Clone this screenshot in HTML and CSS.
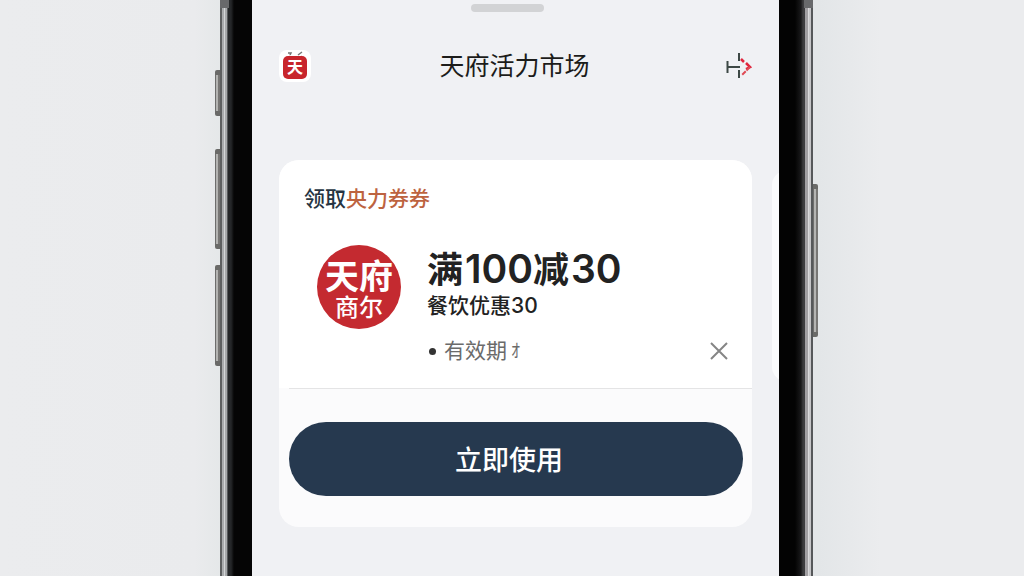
FILE: index.html
```html
<!DOCTYPE html>
<html lang="zh-CN">
<head>
<meta charset="utf-8">
<meta name="viewport" content="width=device-width, initial-scale=1">
<title>天府活力市场</title>
<link rel="stylesheet" href="styles.css">
</head>
<body>
<div class="stage">
  <div class="phone">
    <span class="key key-mute"></span>
    <span class="key key-up"></span>
    <span class="key key-down"></span>
    <span class="key key-power"></span>
    <main class="screen">
      <div class="grabber"></div>
      <header class="topbar">
        <span class="app-icon">
          <svg viewBox="0 0 32 32" aria-hidden="true">
            <path d="M9 3l3 0-1 2M19 5l4-3" stroke="#777" stroke-width="1.5" fill="none"/>
            <path d="M10 6l3 2M20 8l3-2" stroke="#c9343a" stroke-width="1" fill="none"/>
            <rect x="4" y="6" width="24" height="23" rx="5" fill="#c8252c"/>
          </svg>
          <span class="app-glyph">天</span>
        </span>
        <h1 class="title">天府活力市场</h1>
        <button class="icon-button" type="button" aria-label="分享">
          <svg viewBox="0 0 26 28" width="26" height="28" fill="none" stroke-width="2">
            <path d="M1.500 9v12M1 15h13M13 1v8M13 18v8" stroke="#3d4845"/>
            <path d="M15 7l3 3M20 11l4 4-4 2" stroke="#e0243c" stroke-width="2.500"/>
            <path d="M24 15l-8 8" stroke="#df4a55" stroke-dasharray="5 1"/>
          </svg>
        </button>
      </header>
      <div class="deck">
        <section class="card">
          <div class="coupon">
            <h2 class="card-title">领取<span class="accent">央力券券</span></h2>
            <div class="offer">
              <div class="seal"><span class="seal-top">天府</span><span class="seal-bottom">商尔</span></div>
              <div class="details">
                <p class="amount">满<span class="digits">100</span>减<span class="digits">30</span></p>
                <p class="scope">餐饮优惠30</p>
                <div class="validity">
                  <span class="dot"></span><span>有效期</span><span class="mark">ｵ</span>
                  <button class="close" type="button" aria-label="关闭">
                    <svg viewBox="0 0 20 20" width="20" height="20"><path d="M2 2l16 16M18 2L2 18" stroke="#858585" stroke-width="2" fill="none"/></svg>
                  </button>
                </div>
              </div>
            </div>
          </div>
          <div class="actions"><button class="use" type="button">立即使用</button></div>
        </section>
        <div class="next-card"></div>
      </div>
    </main>
  </div>
</div>
</body>
</html>
```
FILE: styles.css
```css
* { box-sizing: border-box; }

body {
  margin: 0;
  font-family: Inter, "Noto Sans CJK SC", sans-serif;
  color: #222;
  background: linear-gradient(90deg, #ebecee 0%, #eaebed 19%, #e4e7e8 22%, #e3e6e8 80%, #ebecee 86%, #ebecee 100%);
}

h1, h2, p { margin: 0; }

button {
  padding: 0;
  border: 0;
  background: none;
  font-family: inherit;
  cursor: pointer;
}

svg { display: block; }

.stage {
  display: grid;
  grid-template-columns: 220fr 593fr 211fr;
  min-height: 100vh;
  overflow: hidden;
}

.phone {
  grid-column: 2;
  position: relative;
  display: flex;
  padding: 0 34px 0 32px;
  background:
    linear-gradient(90deg, #5d5f60 0 2px, #a9abad 2px 4px, #d4d6d8 4px 5px, #a6a8aa 5px 7px, #55585a 7px 8px, #252729 8px 11px, #050505 14px) left / 32px 100% no-repeat,
    linear-gradient(270deg, #56585a 0 2px, #c5c5c7 2px 4px, #d9d9db 4px 5px, #a19fa2 5px 8px, #3c3c3e 8px 10px, #19191a 12px, #030303 18px) right / 34px 100% no-repeat,
    #000;
}

.phone::before,
.phone::after {
  content: "";
  position: absolute;
  top: 0;
  width: 9px;
  height: 8px;
  background: #68696b;
}
.phone::before { left: 0; }
.phone::after { right: 0; }

.key {
  position: absolute;
  left: -5px;
  width: 5px;
  border-radius: 2px 0 0 2px;
  background: linear-gradient(90deg, #6d6d6c 0 1px, #b4b4b2 1px 3px, #777674 3px);
  border-top: 5px solid #6a6a68;
  border-bottom: 5px solid #6a6a68;
}
.key-mute { top: 70px; height: 46px; }
.key-up { top: 149px; height: 100px; }
.key-down { top: 265px; height: 101px; }
.key-power {
  top: 184px;
  left: auto;
  right: -5px;
  height: 153px;
  border-radius: 0 2px 2px 0;
}

.screen {
  flex: 1;
  min-width: 0;
  padding: 4px 27px 48px;
  overflow: hidden;
  background: #f0f1f4;
}

.grabber {
  width: 73px;
  height: 8px;
  margin: 0 auto;
  border-radius: 4px;
  background: #d2d3d5;
  translate: -8px;
}

.topbar {
  display: grid;
  grid-template-columns: 32px 1fr 34px;
  align-items: center;
  height: 34px;
  margin-top: 37px;
}

.app-icon {
  position: relative;
  width: 32px;
  height: 32px;
  border-radius: 8px;
  background: #fff;
}

.app-glyph {
  position: absolute;
  inset: 7px 0 4px;
  color: #fff;
  font-size: 16px;
  font-weight: 700;
  line-height: 20px;
  text-align: center;
}

.title {
  color: #1c1c1a;
  font-size: 25px;
  font-weight: 400;
  line-height: 32px;
  text-align: center;
}

.icon-button { justify-self: end; }

.deck {
  display: flex;
  gap: 20px;
  margin-top: 77px;
}

.card {
  flex: 0 0 100%;
  border-radius: 20px;
  overflow: hidden;
  background: #fbfbfc;
}

.next-card {
  flex: 0 0 100%;
  height: 210px;
  margin-top: 11px;
  border-radius: 14px;
  background: #fafbfc;
}

.coupon {
  padding: 24px 23px 22px 25px;
  background: #fff;
}

.card-title {
  color: #263441;
  font-size: 21px;
  font-weight: 500;
  line-height: 30px;
}

.accent { color: #bd6340; }

.offer {
  display: flex;
  gap: 26px;
  padding: 31px 0 0 13px;
}

.seal {
  display: flex;
  flex: none;
  flex-direction: column;
  align-items: center;
  width: 84px;
  height: 84px;
  padding-top: 14px;
  border-radius: 50%;
  color: #fff;
  background: #c42a30;
}
.seal-top {
  font-size: 34px;
  font-weight: 700;
  line-height: 36px;
}
.seal-bottom {
  font-size: 24px;
  font-weight: 500;
  line-height: 26px;
}

.details {
  flex: 1;
  min-width: 0;
}

.amount {
  font-size: 36px;
  font-weight: 600;
  line-height: 48px;
}
.digits {
  margin-left: 2px;
  font-size: 39px;
}

.scope {
  font-size: 21px;
  font-weight: 500;
  line-height: 24px;
}

.validity {
  display: flex;
  align-items: center;
  margin-top: 18px;
  color: #6b6b6b;
  font-size: 21px;
  line-height: 30px;
}

.dot {
  width: 7px;
  height: 7px;
  margin: 0 8px 0 2px;
  border-radius: 50%;
  background: #333;
}

.mark {
  margin-left: 4px;
  font-size: 18px;
}

.close { margin-left: auto; }

.actions {
  margin-left: 10px;
  padding: 33px 9px 31px 0;
  border-top: 1px solid #e4e4e5;
}

.use {
  display: block;
  width: 100%;
  padding: 19px 38px 15px 24px;
  border-radius: 37px;
  color: #fff;
  background: #26394f;
  font-size: 27px;
  font-weight: 500;
  line-height: 40px;
}
```
